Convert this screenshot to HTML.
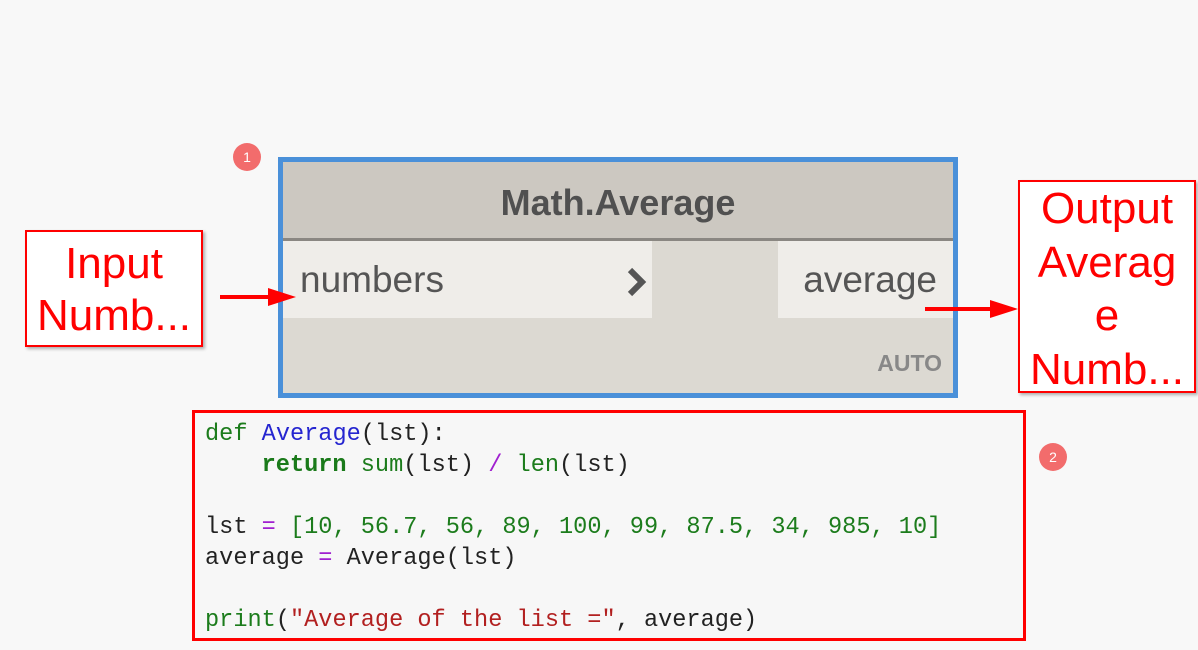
<!DOCTYPE html>
<html><head><style>
body{margin:0;width:1198px;height:650px;background:#f8f8f8;position:relative;overflow:hidden;font-family:"Liberation Sans",sans-serif}
.a{position:absolute}
.node{left:278px;top:157px;width:670px;height:231px;border:5px solid #4a90d9;background:#dcd9d2}
.hdr{left:0;top:0;width:670px;height:76px;background:#ccc8c1;border-bottom:3px solid #8a8782;text-align:center;line-height:82px;font-size:36px;font-weight:bold;color:#505050}
.box{background:#fff;border:2px solid #f00;color:#f00;text-align:center;box-shadow:2px 2px 3px rgba(0,0,0,.3)}
.code{left:192px;top:410px;width:818px;height:219px;border:3px solid #f00;background:#f7f7f7;font-family:"Liberation Mono",monospace;font-size:23.6px;line-height:31px;color:#222;white-space:pre;padding:6px 0 0 10px;box-sizing:content-box}
.g{color:#1c7c1c}.kb{color:#1a7a1a;font-weight:bold}.b{color:#2525d0}.p{color:#a020d0}.r{color:#b22020}
.badge{width:28px;height:28px;border-radius:50%;background:#f26c6c;color:#fff;font-size:14px;text-align:center;line-height:28px}
</style></head><body>
<div class="a badge" style="left:233px;top:143px">1</div>
<div class="a node">
 <div class="a hdr">Math.Average</div>
 <div class="a" style="left:0;top:79px;width:369px;height:77px;background:#efede9"></div>
 <div class="a" style="left:495px;top:79px;width:175px;height:77px;background:#efede9"></div>
 <div class="a" style="left:17px;top:97px;font-size:37px;color:#555">numbers</div>
 <div class="a" style="right:16px;top:97px;font-size:37px;color:#555">average</div>
 <svg class="a" style="left:342px;top:105px" width="24" height="30"><path d="M5 3 L17 15 L5 27" fill="none" stroke="#555" stroke-width="6"/></svg>
 <div class="a" style="right:11px;top:188px;font-size:23px;font-weight:bold;color:#888">AUTO</div>
</div>
<div class="a box" style="left:25px;top:230px;width:178px;height:117px;font-size:44px;line-height:52px;padding-top:6px;box-sizing:border-box">Input<br>Numb...</div>
<div class="a box" style="left:1018px;top:180px;width:178px;height:213px;font-size:44px;line-height:53.5px;box-sizing:border-box">Output<br>Averag<br>e<br>Numb...</div>
<svg class="a" style="left:0;top:0" width="1198" height="650">
 <line x1="220" y1="297" x2="275" y2="297" stroke="#f00" stroke-width="4"/><path d="M268 288 L296 297 L268 306Z" fill="#f00"/>
 <line x1="925" y1="309" x2="995" y2="309" stroke="#f00" stroke-width="4"/><path d="M990 300 L1018 309 L990 318Z" fill="#f00"/>
</svg>
<div class="a code"><span class="g">def</span> <span class="b">Average</span>(lst):
    <span class="kb">return</span> <span class="g">sum</span>(lst) <span class="p">/</span> <span class="g">len</span>(lst)

lst <span class="p">=</span> <span class="g">[10, 56.7, 56, 89, 100, 99, 87.5, 34, 985, 10]</span>
average <span class="p">=</span> Average(lst)

<span class="g">print</span>(<span class="r">"Average of the list ="</span>, average)</div>
<div class="a badge" style="left:1039px;top:443px">2</div>
</body></html>
